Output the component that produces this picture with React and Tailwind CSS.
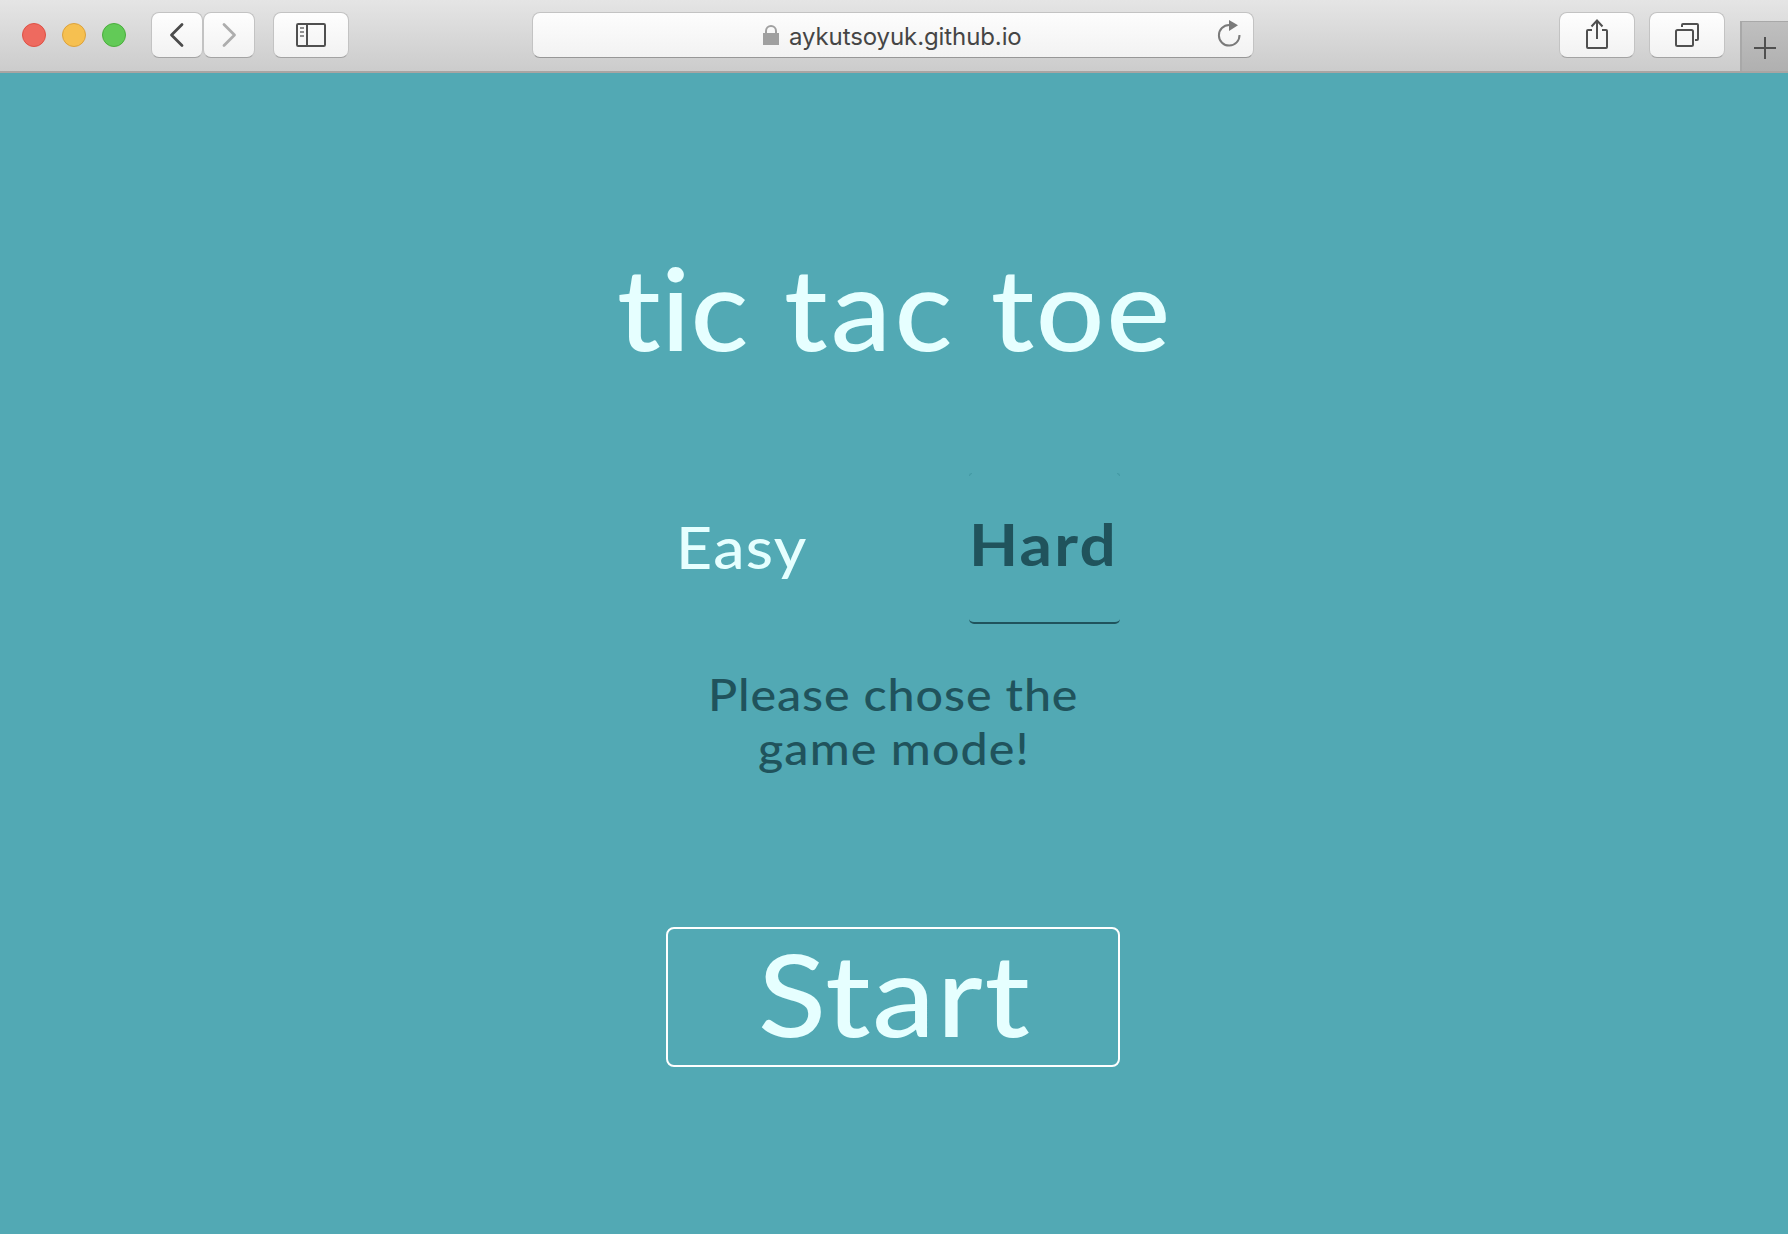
import React from "react";

function ToolButton({ className, children }) {
  return (
    <button
      className={`flex h-[46px] items-center justify-center rounded-[8px] border border-[#c3c3c3] border-b-[#a3a3a3] bg-linear-to-b from-[#fefefe] to-[#f2f2f2] ${className}`}
    >
      {children}
    </button>
  );
}

function Toolbar() {
  return (
    <header className="flex h-[73px] items-start border-b-2 border-[#a9a5a3] bg-linear-to-b from-[#e5e5e5] to-[#cccccc] pt-3">
      <div className="mt-[11px] ml-[22px] flex gap-4">
        <span className="size-6 rounded-full border border-[#de5145] bg-[#ee6a5f]" />
        <span className="size-6 rounded-full border border-[#dca23c] bg-[#f6c050]" />
        <span className="size-6 rounded-full border border-[#4aae3c] bg-[#62ca57]" />
      </div>
      <div className="ml-[25px] flex">
        <ToolButton className="w-[52px]">
          <svg width="50" height="44" fill="none" stroke="#4b4b4b" strokeWidth="2.8" strokeLinecap="round" strokeLinejoin="round">
            <path d="M30 11.5 L19.5 22 L30 32.5" />
          </svg>
        </ToolButton>
        <ToolButton className="w-[52px]">
          <svg width="50" height="44" fill="none" stroke="#adadad" strokeWidth="2.8" strokeLinecap="round" strokeLinejoin="round">
            <path d="M20 11.5 L30.5 22 L20 32.5" />
          </svg>
        </ToolButton>
      </div>
      <ToolButton className="ml-[18px] w-[76px]">
        <svg width="30" height="24" fill="none" stroke="#505050" strokeWidth="2">
          <rect x="1" y="1" width="28" height="22" rx="1.2" />
          <path d="M11 1V23" />
          <path d="M4 5H8M4 9H8M4 13H8" stroke="#909090" strokeWidth="2" />
        </svg>
      </ToolButton>
      <div className="ml-[183px] flex h-[46px] w-[722px] items-center rounded-[8px] border border-[#c3c3c3] border-b-[#979797] bg-linear-to-b from-[#fdfdfd] to-[#f2f2f2]">
        <svg className="mb-px ml-[230px]" width="16" height="20">
          <rect y="8" width="16" height="12" fill="#a0a0a0" />
          <path d="M3 9V6a5 5 0 0 1 10 0V9" fill="none" stroke="#a0a0a0" strokeWidth="2" />
        </svg>
        <span className="mt-[3px] ml-[10px] font-['Inter',sans-serif] text-[24px] leading-[30px] font-normal tracking-[-0.1px] text-[#454545]">
          aykutsoyuk.github.io
        </span>
        <svg className="mr-[10px] mb-[3px] ml-auto" width="26" height="28">
          <path d="M22.5 15a10.3 10.3 0 1 1 -10.3 -10" fill="none" stroke="#7a7a7a" strokeWidth="2" />
          <path d="M12 0V11L21 5.3Z" fill="#7a7a7a" />
        </svg>
      </div>
      <ToolButton className="ml-[305px] w-[76px]">
        <svg className="mb-[3px]" width="22" height="30" fill="none" stroke="#505050" strokeWidth="2">
          <path d="M6 11H2a1 1 0 0 0 -1 1V28a1 1 0 0 0 1 1H20a1 1 0 0 0 1 -1V12a1 1 0 0 0 -1 -1H16" />
          <path d="M11 1.5V20M5.5 7.5L11 1.5L16.5 7.5" />
        </svg>
      </ToolButton>
      <ToolButton className="ml-[14px] w-[76px]">
        <svg width="24" height="24" fill="none" stroke="#505050" strokeWidth="2">
          <rect x="1" y="7" width="17" height="16" rx="1.5" />
          <path d="M7 4V2a1 1 0 0 1 1 -1H22a1 1 0 0 1 1 1V16a1 1 0 0 1 -1 1H20" />
        </svg>
      </ToolButton>
      <button className="mt-[9px] ml-[15px] flex h-[50px] flex-1 items-center justify-center border-t border-l-2 border-[#a8a8a8] bg-linear-to-b from-[#bfbfbf] to-[#b0b0b0]">
        <svg className="mt-[3px]" width="22" height="22" stroke="#505050" strokeWidth="2">
          <path d="M11 0V22M0 11H22" />
        </svg>
      </button>
    </header>
  );
}

export default function App() {
  return (
    <div className="flex h-[1234px] w-[1788px] flex-col overflow-hidden bg-[#52a9b4] font-['Lato',sans-serif] font-medium">
      <Toolbar />
      <main className="flex flex-col">
        <h1 className="mt-[170px] ml-[617px] w-[560px] origin-left scale-x-[1.06] text-[114px] leading-[128px] whitespace-nowrap text-[#e6ffff] [word-spacing:4.5px]">
          <span className="tracking-[0.2px]">tic</span> <span className="tracking-[3px]">tac</span>{" "}
          <span className="tracking-[1.6px]">toe</span>
        </h1>
        <section className="ml-[666px] flex w-[454px] flex-col">
          <div className="mt-[102px] flex justify-between text-[57px]">
            <button className="flex h-[151px] w-[151px] items-center pb-px pl-[10px] tracking-[1.2px] text-[#e6ffff]">
              <span className="origin-left scale-x-110">Easy</span>
            </button>
            <button className="relative flex h-[151px] w-[151px] items-center rounded-[5px] border-b-2 border-[#20535c] pb-[5px] font-bold tracking-[2px] text-[#20535c]">
              <span className="origin-left scale-x-[1.12]">Hard</span>
              <span className="absolute top-0 left-0 size-[3px] rounded-tl-[3px] border-t border-l border-[#459aa5]" />
              <span className="absolute top-0 right-0 size-[3px] rounded-tr-[3px] border-t border-r border-[#459aa5]" />
            </button>
          </div>
          <p className="mt-[43px] flex flex-col items-start text-[44px] leading-[54px] whitespace-nowrap text-[#20535c]">
            <span className="ml-[42px] origin-left scale-x-110 tracking-[0.8px]">Please chose the</span>
            <span className="ml-[92px] origin-left scale-x-110 tracking-[1px]">game mode!</span>
          </p>
          <button className="mt-[152px] flex h-[140px] items-center rounded-[8px] border-2 border-white pb-[8px] pl-[90px] text-[114px] leading-none tracking-[1.6px] text-[#e6ffff]">
            <span className="origin-left scale-x-110">Start</span>
          </button>
        </section>
      </main>
    </div>
  );
}
